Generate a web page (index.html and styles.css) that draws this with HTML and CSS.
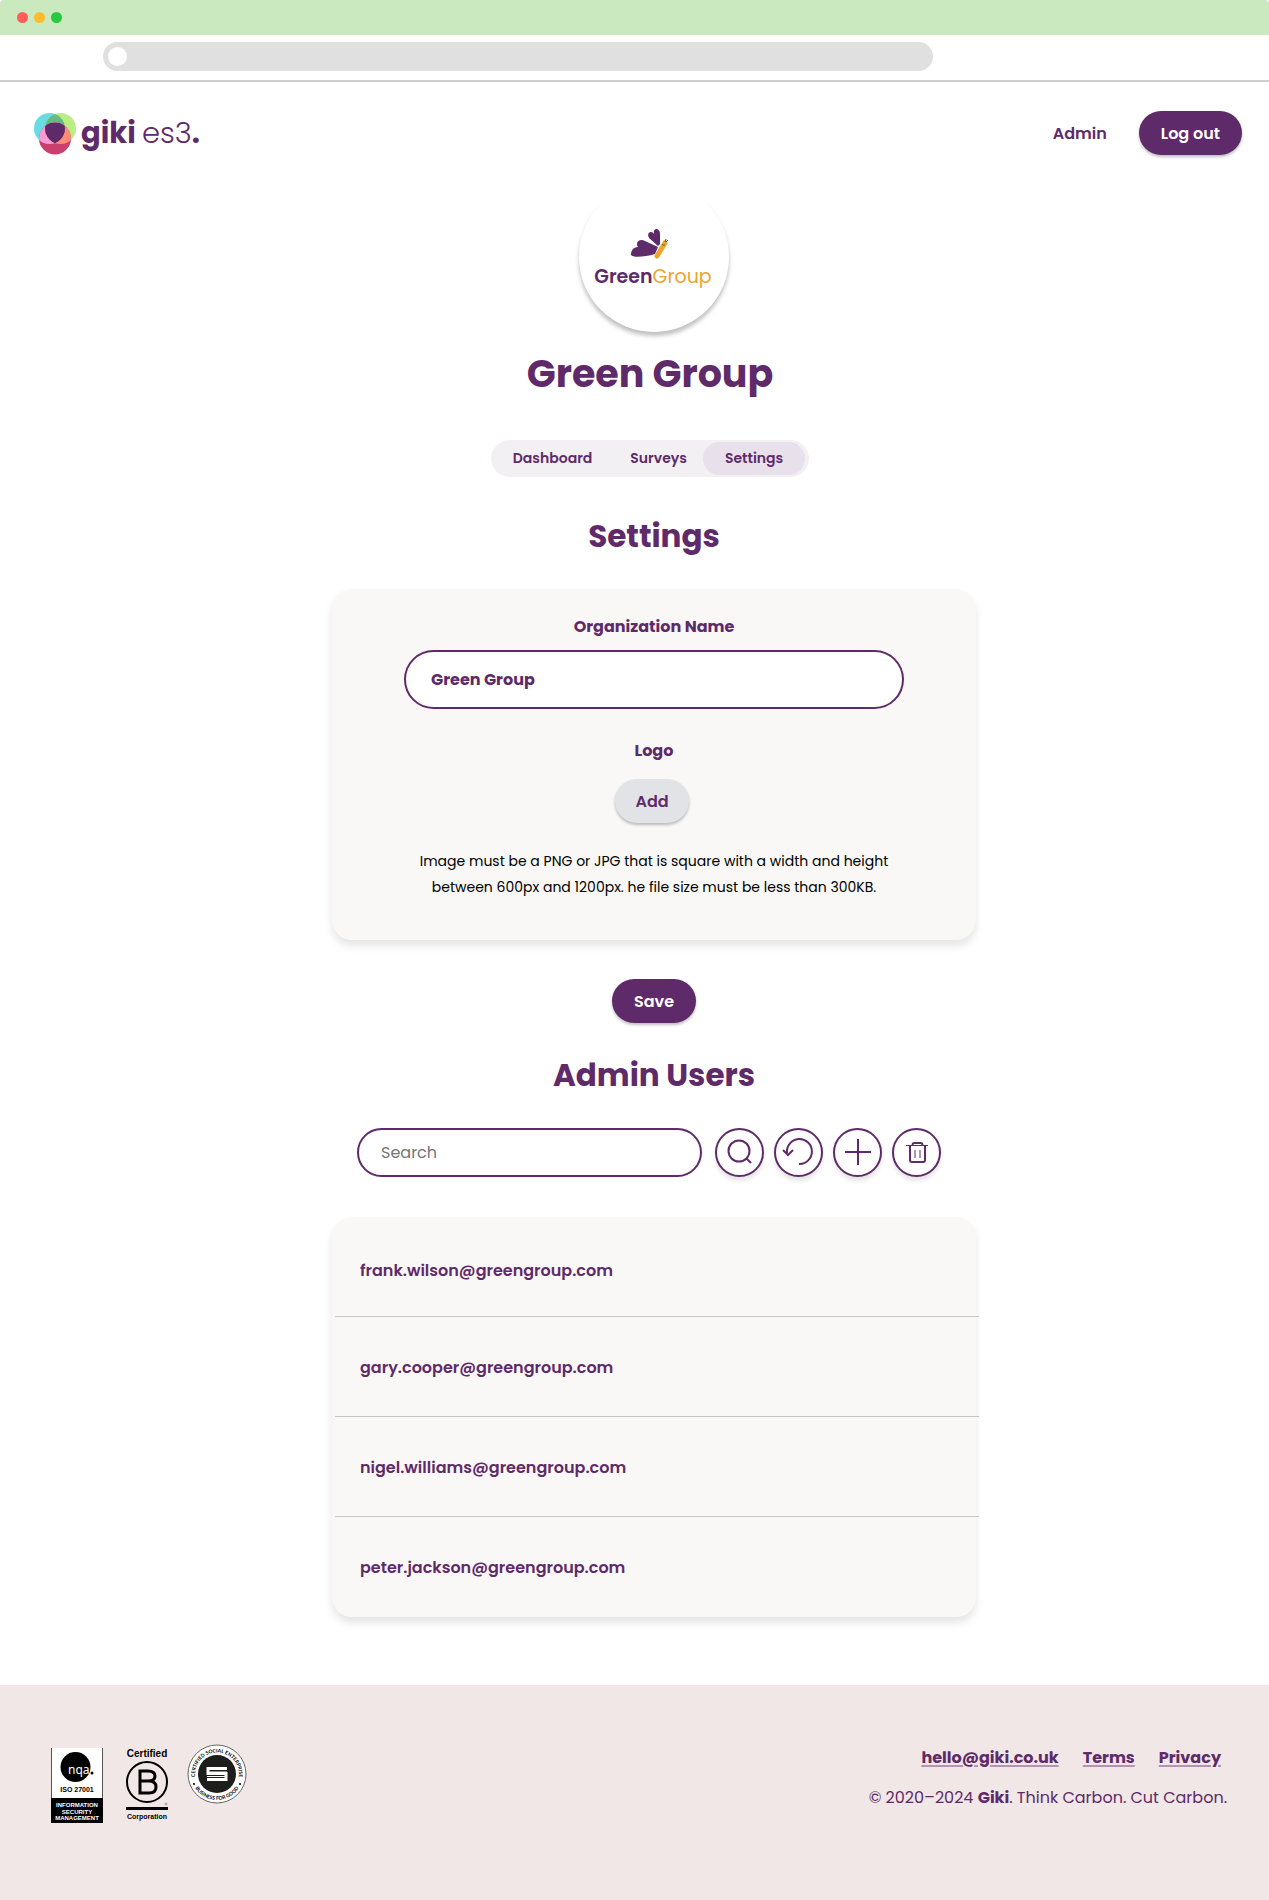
FILE: index.html
```html
<!DOCTYPE html>
<html lang="en">
<head>
<meta charset="utf-8">
<meta name="viewport" content="width=device-width, initial-scale=1">
<title>Green Group – Settings</title>
<link rel="stylesheet" href="styles.css">
</head>
<body>
<div class="window-bar">
  <span class="dot dot-close"></span>
  <span class="dot dot-minimise"></span>
  <span class="dot dot-expand"></span>
</div>
<div class="address-row"><div class="address-bar"><span class="address-icon"></span></div></div>

<header class="site-header">
  <a class="brand" href="#" aria-label="giki es3">
    <svg class="brand-mark" viewBox="0 0 42 42" aria-hidden="true">
      <defs>
        <clipPath id="left"><circle cx="15.500" cy="15.500" r="15.500"/></clipPath>
        <clipPath id="right"><circle cx="26.500" cy="15.500" r="15.500"/></clipPath>
      </defs>
      <circle cx="15.500" cy="15.500" r="15.500" fill="#69dce3"/>
      <circle cx="26.500" cy="15.500" r="15.500" fill="#b9ee82"/>
      <circle cx="21" cy="25.500" r="16" fill="#c9406f"/>
      <circle cx="26.500" cy="15.500" r="15.500" fill="#66b983" clip-path="url(#left)"/>
      <circle cx="21" cy="25.500" r="16" fill="#fa9ad2" clip-path="url(#left)"/>
      <circle cx="21" cy="25.500" r="16" fill="#ff8c75" clip-path="url(#right)"/>
      <g clip-path="url(#left)"><circle cx="21" cy="25.500" r="16" fill="#5f2a69" clip-path="url(#right)"/></g>
    </svg>
    <span class="brand-name">giki <span class="brand-product">es3</span>.</span>
  </a>
  <nav class="account">
    <a class="account-link" href="#">Admin</a>
    <button class="button button-primary" type="button">Log out</button>
  </nav>
</header>

<main class="page">
  <section class="profile">
    <div class="avatar">
      <svg class="butterfly" viewBox="0 0 38 30" aria-hidden="true">
        <path fill="#5f2a69" d="M27 18L14 12C11 10 6 11 6 15Q6 17 7 18C2 18 0 22 0 26C2 29 14 28 24 25Z"/>
        <path fill="#5f2a69" d="M27 17L18 9C16 5 18 3 20 3Q22 3 23 5C22 0 25 0 26 0Q29 1 29 5V15Z"/>
        <path d="M34 14L26 27" stroke="#eba52f" stroke-width="5" stroke-linecap="round"/>
        <path d="M34 13l1-3M35 13l2-2M31 15q1 2 3 1" fill="none" stroke="#765027"/>
      </svg>
      <div class="avatar-name">Green<span class="avatar-name-end">Group</span></div>
    </div>
    <h1 class="title">Green Group</h1>
    <nav class="tabs">
      <a class="tab" href="#">Dashboard</a>
      <a class="tab" href="#">Surveys</a>
      <a class="tab tab-active" href="#" aria-current="page">Settings</a>
    </nav>
  </section>

  <form class="settings">
    <h2 class="heading">Settings</h2>
    <div class="card settings-card">
      <label class="label" for="org-name">Organization Name</label>
      <input class="org-input" id="org-name" type="text" value="Green Group">
      <span class="label logo-label" id="logo-label">Logo</span>
      <button class="button button-muted" type="button" aria-describedby="logo-label">Add</button>
      <p class="hint">Image must be a PNG or JPG that is square with a width and height between 600px and 1200px. he file size must be less than 300KB.</p>
    </div>
    <button class="button button-primary" type="button">Save</button>
  </form>

  <section class="admins">
    <h2 class="heading">Admin Users</h2>
    <form class="toolbar">
      <input class="search-input" type="search" placeholder="Search" aria-label="Search admin users">
      <div class="tools">
        <button class="tool" type="button" aria-label="Search">
          <svg viewBox="0 0 45 45"><circle cx="22" cy="21" r="10.500"/><path d="M29 28l5 5"/></svg>
        </button>
        <button class="tool" type="button" aria-label="Reset">
          <svg viewBox="0 0 45 45"><path d="M11 23A12.500 12.500 0 1 1 23 34M7 20l5 5 5-5"/></svg>
        </button>
        <button class="tool" type="button" aria-label="Add user">
          <svg viewBox="0 0 45 45"><path d="M23 9v26M10 22h26"/></svg>
        </button>
        <button class="tool" type="button" aria-label="Delete user">
          <svg viewBox="0 0 45 45"><path class="fine" d="M12 15.500h22M21 20v8M26 20v8"/><path class="medium" d="M16 16v14q0 2 2 2h11q2 0 2-2V16M18.500 15q0-2 2-2h6q2 0 2 2"/></svg>
        </button>
      </div>
    </form>
    <ul class="card user-list">
      <li class="user">frank.wilson@greengroup.com</li>
      <li class="user">gary.cooper@greengroup.com</li>
      <li class="user">nigel.williams@greengroup.com</li>
      <li class="user">peter.jackson@greengroup.com</li>
    </ul>
  </section>
</main>

<footer class="site-footer">
  <div class="badges">
    <svg class="badge-iso" width="52" height="75" viewBox="0 0 52 75" role="img" aria-label="NQA ISO 27001">
      <path fill="#fff" d="M0 0h52v75H0z"/><path d="M.5 0v75M51.500 0v75" stroke="#555"/>
      <circle cx="24.500" cy="19" r="15"/>
      <text class="nqa" x="17" y="26">nqa</text>
      <circle cx="41" cy="25" r="1.500"/>
      <text class="iso" x="26" y="44">ISO 27001</text>
      <path d="M0 50h52v25H0z"/>
      <g class="iso-note"><text x="26" y="59">INFORMATION</text><text x="26" y="66">SECURITY</text><text x="26" y="72">MANAGEMENT</text></g>
    </svg>
    <svg class="badge-bcorp" width="44" height="75" viewBox="0 0 44 75" role="img" aria-label="Certified B Corporation">
      <text class="certified" x="22" y="9">Certified</text>
      <circle cx="22" cy="34" r="20" fill="none" stroke="#000" stroke-width="2"/>
      <path fill="none" stroke="#000" stroke-width="3" d="M15 23h8q7 0 7 5t-7 5h-8zm0 10h9q7 0 7 6t-7 6h-9z"/>
      <circle cx="41" cy="56" r="1" fill="none" stroke="#555" stroke-width=".5"/>
      <path d="M1 59h42v3H1z"/><text class="corporation" x="22" y="71">Corporation</text>
    </svg>
    <svg class="badge-social" width="60" height="60" viewBox="0 0 60 60" role="img" aria-label="Certified Social Enterprise, Business for Good">
      <defs><path id="arc-top" d="M9 37A22 22 0 1 1 51 37"/><path id="arc-bottom" d="M5 37A26 26 0 0 0 55 37"/></defs>
      <circle cx="30" cy="30" r="29" fill="#fff" stroke="#666"/>
      <circle cx="30" cy="30" r="19" fill="#1d1d1b"/>
      <path fill="none" stroke="#fff" stroke-width="3" d="M40 24.500H21v5h18v6H20"/>
      <path stroke="#fff" stroke-width="1" d="M20 32.500h20M20 28h20"/>
      <g class="ring-text"><text><textPath href="#arc-top" startOffset="50%">CERTIFIED SOCIAL ENTERPRISE</textPath></text><text><textPath href="#arc-bottom" startOffset="50%">BUSINESS FOR GOOD</textPath></text></g>
      <circle cx="7" cy="40" r="1"/><circle cx="53" cy="40" r="1"/>
    </svg>
  </div>
  <div class="footer-info">
    <nav class="footer-links">
      <a class="footer-link" href="#">hello@giki.co.uk</a>
      <a class="footer-link" href="#">Terms</a>
      <a class="footer-link" href="#">Privacy</a>
    </nav>
    <p class="copyright">© 2020–2024 <strong>Giki</strong>. Think Carbon. Cut Carbon.</p>
  </div>
</footer>
</body>
</html>
```
FILE: styles.css
```css
:root {
  --purple: #5f2a69;
  --surface: #f9f8f6;
}

* { box-sizing: border-box; }

body {
  display: flex;
  flex-direction: column;
  min-height: 100vh;
  margin: 0;
  background: #fff;
  color: var(--purple);
  font: 16px/24px Poppins, Inter, sans-serif;
}

a { color: inherit; text-decoration: none; }
h1, h2, p, ul { margin: 0; padding: 0; }
button, input { font: inherit; color: inherit; }

/* Browser chrome */
.window-bar {
  display: flex;
  align-items: center;
  gap: 6px;
  height: 35px;
  padding: 0 17px;
  border-radius: 4px 4px 0 0;
  background: #cbe9bf;
}
.dot { width: 11px; height: 11px; border-radius: 50%; }
.dot-close { background: #ff5f57; }
.dot-minimise { background: #febc2e; }
.dot-expand { background: #28c840; }
.address-row {
  padding: 7px 103px 9px;
  border-bottom: 2px solid #cfcfcf;
}
.address-bar {
  display: flex;
  align-items: center;
  max-width: 830px;
  height: 29px;
  padding: 0 5px;
  border-radius: 15px;
  background: #e0e0e0;
}
.address-icon { width: 19px; height: 19px; border-radius: 50%; background: #fff; }

/* Header */
.site-header {
  display: flex;
  align-items: center;
  justify-content: space-between;
  padding: 29px 27px 27px 34px;
}
.brand { display: flex; align-items: center; gap: 5px; padding-top: 2px; }
.brand-mark { width: 42px; height: 42px; }
.brand-name { padding-bottom: 2px; font-size: 29px; line-height: 40px; font-weight: 700; }
.brand-product { font-weight: 300; }
.account { display: flex; align-items: center; gap: 32px; }
.account-link { padding-top: 2px; font-weight: 600; }

.button {
  height: 44px;
  padding: 2px 22px 0;
  border: 0;
  border-radius: 22px;
  font-weight: 600;
  box-shadow: 0 2px 3px rgba(0, 0, 0, .25);
}
.button-primary { background: var(--purple); color: #fff; }
.button-muted { margin-right: 4px; padding: 2px 20px 0; background: #e1e3e7; }

/* Main column */
.page {
  display: flex;
  flex-direction: column;
  align-items: center;
  padding: 0 0 68px 39px;
}
.profile { display: flex; flex-direction: column; align-items: center; }
.avatar {
  display: flex;
  flex-direction: column;
  align-items: center;
  width: 150px;
  height: 150px;
  padding-top: 47px;
  border-radius: 50%;
  background: #fff;
  box-shadow: 0 4px 4px rgba(0, 0, 0, .25);
  clip-path: inset(22px -8px -10px -8px);
}
.butterfly { width: 38px; height: 30px; margin-right: 8px; }
.avatar-name { margin-right: 2px; font-size: 19px; line-height: 36px; font-weight: 600; }
.avatar-name-end { color: #eba52f; font-weight: 400; }
.title { margin: 16px 8px 0 0; font-size: 38px; line-height: 52px; font-weight: 700; }
.tabs {
  display: flex;
  margin: 40px 8px 0 0;
  padding: 2px 4px 2px 0;
  border-radius: 19px;
  background: #f2f0f3;
}
.tab {
  padding: 0 16px;
  border-radius: 17px;
  font-size: 14px;
  line-height: 33px;
  font-weight: 600;
}
.tab:first-child { padding: 0 22px; }
.tab-active { padding: 0 22px; background: #e8e0ea; }

.heading { font-size: 31px; line-height: 40px; font-weight: 700; text-align: center; }
.card {
  width: 100%;
  border-radius: 20px;
  background: var(--surface);
  box-shadow: 0 6px 8px rgba(0, 0, 0, .1);
}
.settings, .admins { width: 100%; max-width: 644px; }
.settings { display: flex; flex-direction: column; align-items: center; margin-top: 39px; }
.settings-card {
  display: flex;
  flex-direction: column;
  align-items: center;
  margin: 33px 0 39px;
  padding: 26px 72px 40px;
}
.label { font-weight: 700; }
.org-input {
  width: 100%;
  height: 59px;
  margin: 11px 0 30px;
  padding: 0 25px;
  border: 2px solid var(--purple);
  border-radius: 30px;
  background: #fff;
  font-weight: 700;
}
.logo-label { margin-bottom: 16px; }
.hint {
  max-width: 480px;
  margin-top: 25px;
  color: #000;
  font-size: 14px;
  line-height: 26px;
  text-align: center;
}

/* Admin users */
.admins { margin-top: 32px; }
.toolbar { display: flex; gap: 13px; margin: 33px 35px 40px 25px; }
.search-input {
  flex: 1;
  min-width: 0;
  height: 49px;
  padding: 0 22px;
  border: 2px solid var(--purple);
  border-radius: 25px;
  background: #fff;
}
.search-input::placeholder { color: #757575; opacity: 1; }
.tools { display: flex; gap: 10px; }
.tool {
  width: 49px;
  height: 49px;
  padding: 0;
  border: 2px solid var(--purple);
  border-radius: 50%;
  background: #fff;
  box-shadow: 0 4px 4px rgba(0, 0, 0, .1);
}
.tool svg { display: block; fill: none; stroke: var(--purple); stroke-width: 2; }
.tool .fine { stroke-width: 1; }
.tool .medium { stroke-width: 2; }
.user-list { list-style: none; }
.user {
  display: flex;
  align-items: center;
  height: 100px;
  margin: 0 -3px 0 3px;
  padding: 2px 25px 0;
  font-weight: 600;
}
.user:first-child { height: 99px; padding-top: 8px; }
.user + .user { border-top: 1px solid #c4c4c4; }
.user:last-child { height: 101px; }

/* Footer */
.site-footer {
  display: flex;
  flex: 1;
  align-items: flex-start;
  justify-content: space-between;
  padding: 59px 42px 59px 51px;
  background: #f0e7e6;
}
.badges { display: flex; align-items: flex-start; }
.badge-iso { margin: 4px 22px 0 0; }
.badge-bcorp { margin: 4px 18px 0 0; }
.badges text { font-family: "Liberation Sans", sans-serif; text-anchor: middle; }
.badges .nqa { fill: #fff; font: 12px "Noto Sans", sans-serif; text-anchor: start; }
.badges .iso { font-size: 7px; font-weight: 700; }
.iso-note text { fill: #fff; font-size: 6px; font-weight: 700; }
.badges .certified { font-size: 10px; font-weight: 700; }
.badges .corporation { font-size: 7px; font-weight: 700; }
.badges .ring-text text { font-family: Lato, sans-serif; font-size: 5px; font-weight: 700; }
.footer-info { display: flex; flex-direction: column; gap: 16px; align-items: flex-end; padding-top: 2px; }
.footer-links { display: flex; gap: 24px; padding-right: 6px; }
.footer-link {
  font-weight: 700;
  text-decoration: underline;
  text-decoration-color: #b294b6;
  text-decoration-thickness: 2px;
  text-underline-offset: 2px;
}
```
